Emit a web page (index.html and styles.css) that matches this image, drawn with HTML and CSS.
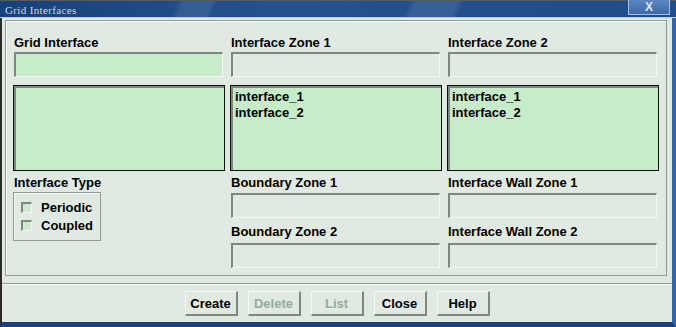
FILE: index.html
```html
<!DOCTYPE html>
<html lang="en">
<head>
  <meta charset="UTF-8">
  <title>Grid Interfaces</title>
  <link rel="stylesheet" href="styles.css">
</head>
<body>
  <div class="window">
    <div class="titlebar">
      <span class="title">Grid Interfaces</span>
      <span class="close">X</span>
    </div>
    <div class="main">
      <div class="panel">
        <div class="col">
          <div class="label">Grid Interface</div>
          <div class="textbox green"></div>
          <div class="listbox"></div>
          <div class="label row2">Interface Type</div>
          <div class="group">
            <div class="check"><span class="box"></span>Periodic</div>
            <div class="check"><span class="box"></span>Coupled</div>
          </div>
        </div>
        <div class="col">
          <div class="label">Interface Zone 1</div>
          <div class="textbox"></div>
          <div class="listbox">
            <div class="item">interface_1</div>
            <div class="item">interface_2</div>
          </div>
          <div class="label row2">Boundary Zone 1</div>
          <div class="textbox"></div>
          <div class="label row3">Boundary Zone 2</div>
          <div class="textbox"></div>
        </div>
        <div class="col">
          <div class="label">Interface Zone 2</div>
          <div class="textbox"></div>
          <div class="listbox">
            <div class="item">interface_1</div>
            <div class="item">interface_2</div>
          </div>
          <div class="label row2">Interface Wall Zone 1</div>
          <div class="textbox"></div>
          <div class="label row3">Interface Wall Zone 2</div>
          <div class="textbox"></div>
        </div>
      </div>
      <div class="separator"></div>
      <div class="buttons">
        <button>Create</button>
        <button disabled>Delete</button>
        <button disabled>List</button>
        <button>Close</button>
        <button>Help</button>
      </div>
    </div>
  </div>
</body>
</html>
```

FILE: styles.css
```css
* {
  box-sizing: border-box;
}
html, body {
  margin: 0;
  padding: 0;
  background: #e0eae3;
}
body {
  font-family: "Liberation Sans", Arial, sans-serif;
  font-size: 13px;
  font-weight: bold;
  color: #000;
}
.window {
  width: 676px;
  height: 327px;
  display: flex;
  flex-direction: column;
  overflow: hidden;
}
.titlebar {
  height: 18px;
  flex: none;
  display: flex;
  align-items: flex-start;
  justify-content: space-between;
  border-bottom: 1px solid #b7c9dc;
  background:
    linear-gradient(115deg, transparent 0 26%, rgba(255,255,255,0.09) 27% 31%, transparent 32% 60%, rgba(255,255,255,0.09) 61% 67%, transparent 68%),
    linear-gradient(to right, #17417a, #24528f 40%, #1f4c8a);
  border-top: 1px solid #5c5a52;
}
.title {
  font-family: "Liberation Serif", serif;
  font-weight: normal;
  font-size: 11px;
  letter-spacing: 0.35px;
  color: #cdd8e4;
  padding: 3px 0 0 5px;
  line-height: 12px;
}
.close {
  width: 42px;
  height: 15px;
  margin: -1px 6px 0 0;
  border: 1px solid #a9bedc;
  border-top: none;
  background: linear-gradient(#5d86c0, #3c69aa);
  color: #dfe7f2;
  font-size: 12px;
  line-height: 14px;
  text-align: center;
}
.main {
  flex: 1;
  display: flex;
  flex-direction: column;
  border-left: 2px solid #2b2b2b;
  border-right: 4px solid #3666a9;
  border-bottom: 5px solid #1d3f7c;
  background: #e0eae3;
}
.panel {
  height: 256px;
  margin: 2px 5px 0 3px;
  padding: 14px 7px 0 7px;
  border: 1px solid #8d9c93;
  box-shadow: inset 1px 1px 0 #f6f9f6;
  display: flex;
  gap: 5px;
}
.col {
  width: 212px;
  display: flex;
  flex-direction: column;
}
.label {
  line-height: 16px;
  padding-left: 1px;
  white-space: nowrap;
}
.label.row2 {
  margin-top: 4px;
}
.label.row3 {
  margin-top: 6px;
}
.textbox {
  height: 25px;
  margin: 1px 2px 0 1px;
  border-top: 2px solid #7b8a81;
  border-left: 2px solid #7b8a81;
  border-right: 1px solid #f4f8f4;
  border-bottom: 1px solid #f4f8f4;
  background: #e0eae3;
}
.label.row2 + .textbox {
  margin-top: 2px;
}
.label.row3 + .textbox {
  margin-top: 3px;
}
.textbox.green {
  background: #c8ebca;
}
.listbox {
  height: 86px;
  margin-top: 8px;
  border: 1px solid #111;
  box-shadow: inset 2px 2px 0 #7b8a81;
  background: #c8ebca;
  padding: 3px 0 0 4px;
}
.item {
  line-height: 16px;
}
.group {
  width: 88px;
  margin-top: 1px;
  padding: 6px 0 5px 7px;
  border: 1px solid #8d9c93;
  box-shadow: inset 1px 1px 0 #f6f9f6;
}
.check {
  display: flex;
  align-items: center;
  line-height: 18px;
}
.box {
  width: 11px;
  height: 11px;
  margin: -1px 9px 0 0;
  border-top: 2px solid #7b8a81;
  border-left: 2px solid #7b8a81;
  border-right: 1px solid #f4f8f4;
  border-bottom: 1px solid #f4f8f4;
  background: #cdeacf;
}
.separator {
  margin-top: 7px;
  border-top: 1px solid #8d9c93;
  border-bottom: 1px solid #f6f9f6;
}
.buttons {
  display: flex;
  justify-content: center;
  gap: 10px;
  margin-top: 6px;
}
button {
  width: 53px;
  height: 25px;
  padding: 0;
  font-family: inherit;
  font-size: 13px;
  font-weight: bold;
  color: #000;
  background: #e0eae3;
  border-top: 1px solid #f6f9f6;
  border-left: 1px solid #f6f9f6;
  border-right: 2px solid #7b8a81;
  border-bottom: 2px solid #7b8a81;
}
button:disabled {
  color: #94ab9d;
}
```
